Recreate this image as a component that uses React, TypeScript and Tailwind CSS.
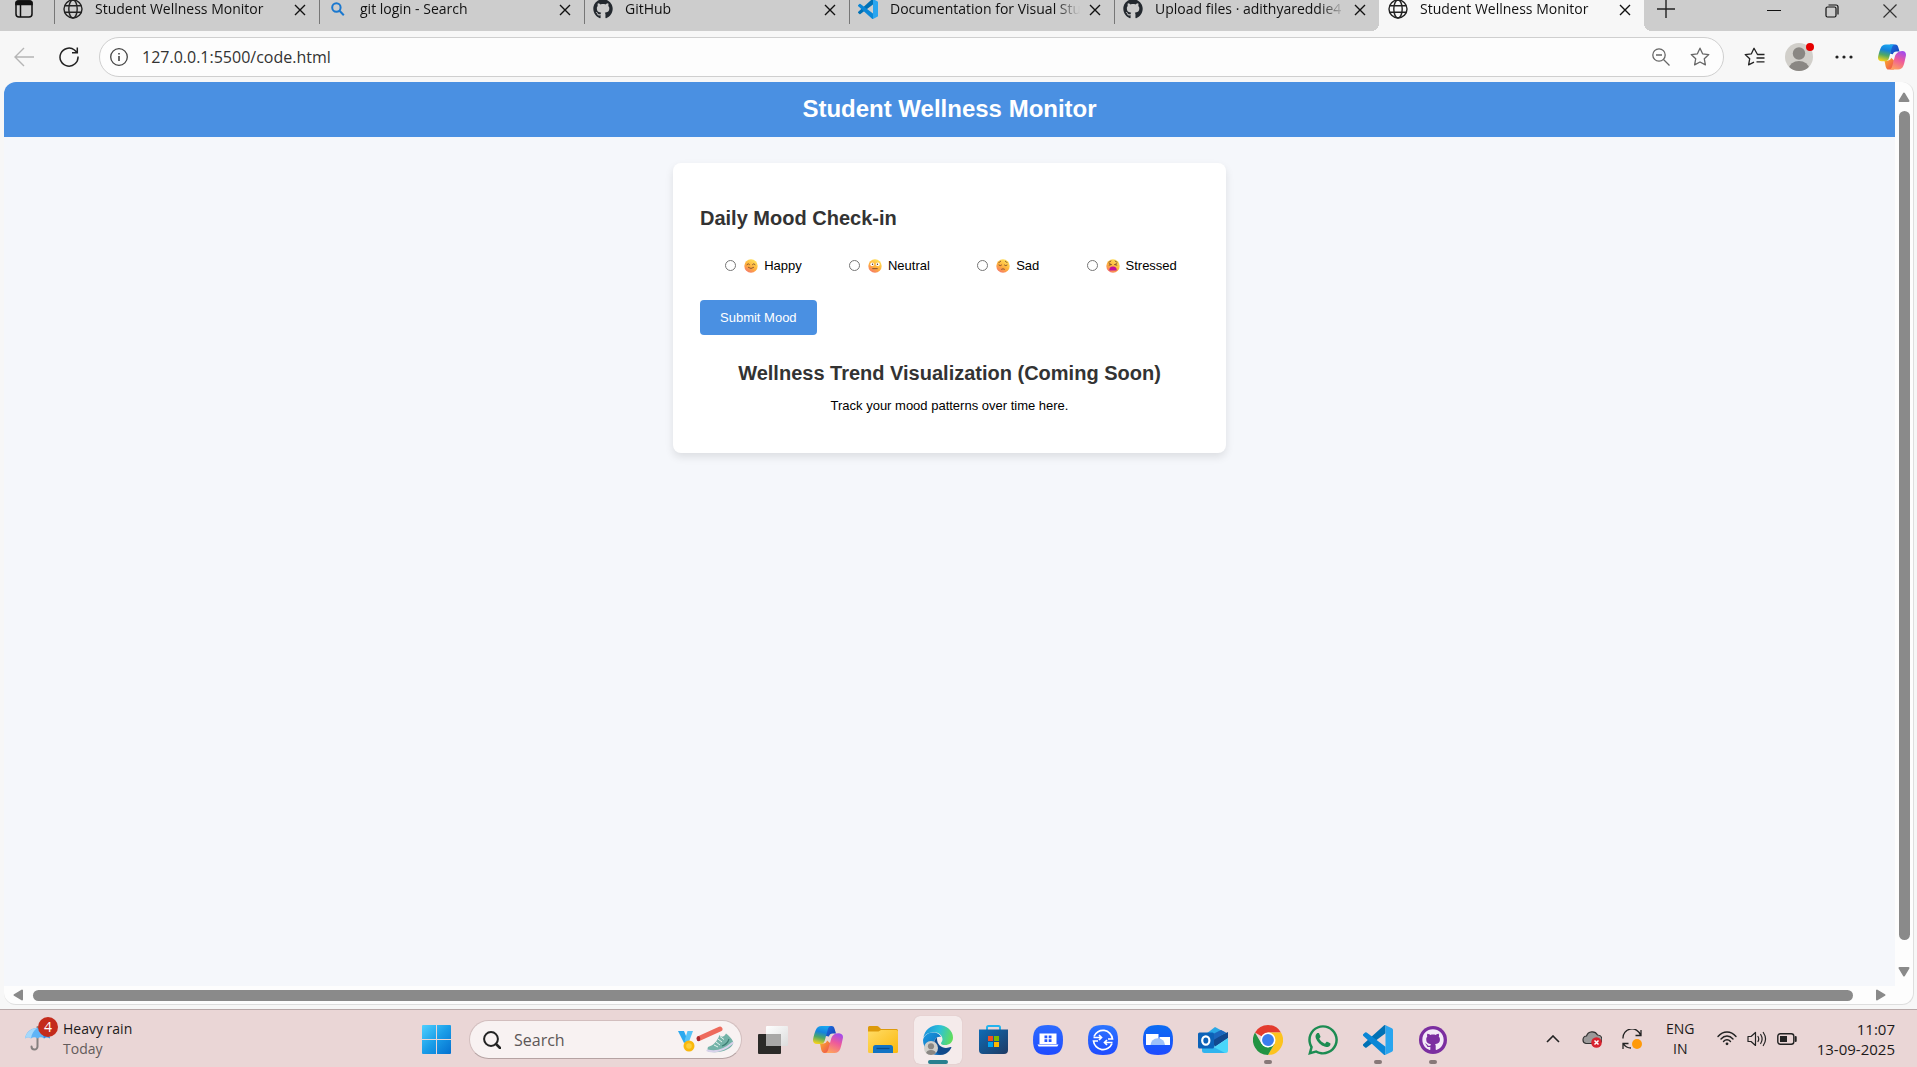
import { useId, type ReactNode } from "react";
import { FaGithub, FaWhatsapp } from "react-icons/fa";

/* ---------- browser icons ---------- */

function GlobeIcon() {
  return (
    <svg viewBox="0 0 20 20" className="size-5" fill="none" stroke="#222" strokeWidth="1.4">
      <circle cx="10" cy="10" r="9" />
      <ellipse cx="10" cy="10" rx="4.2" ry="9" />
      <path d="M1.8 6.8h16.4M1.8 13.2h16.4" />
    </svg>
  );
}

function BingSearchIcon() {
  return (
    <svg viewBox="0 0 20 20" className="size-5" fill="none" stroke="#1a78cf" strokeWidth="2">
      <circle cx="8.4" cy="8.500" r="4.200" />
      <path d="m11.500 11.800 4.300 4.500" />
    </svg>
  );
}

function VsCodeIcon({ className }: { className: string }) {
  return (
    <svg viewBox="0 0 24 24" className={className}>
      <path fill="#0071b5" d="M.327 15.26 16.505.5a1.494 1.494 0 0 1 1.5-.37v6.42L2.926 18a1 1 0 0 1-1.276-.06L.327 16.74a1 1 0 0 1 0-1.48z" />
      <path fill="#0a86d6" d="M.327 8.74 16.505 23.5a1.5 1.5 0 0 0 1.5.37v-6.42L2.926 6a1 1 0 0 0-1.276.06L.327 7.26a1 1 0 0 0 0 1.48z" />
      <path fill="#29a5ef" d="M18 .13l5.15 2.457A1.5 1.5 0 0 1 24 3.94v16.12a1.5 1.5 0 0 1-.85 1.352L18 23.87z" />
    </svg>
  );
}

function CloseIcon() {
  return (
    <svg viewBox="0 0 12 12" className="size-3" stroke="#111" strokeWidth="1.4">
      <path d="m1 1 10 10M11 1 1 11" />
    </svg>
  );
}

function CopilotIcon({ className }: { className: string }) {
  const id = useId();
  return (
    <svg viewBox="0 0 30 27" className={className}>
      <defs>
        <linearGradient id={id + "a"} x1="0.6" y1="0" x2="0.35" y2="1">
          <stop offset="0" stopColor="#1aa7f0" />
          <stop offset=".35" stopColor="#1583dc" />
          <stop offset=".65" stopColor="#4fa865" />
          <stop offset="1" stopColor="#f3d21c" />
        </linearGradient>
        <linearGradient id={id + "b"} x1="0" y1="0" x2="1" y2="1">
          <stop offset="0" stopColor="#1f6fe0" />
          <stop offset="1" stopColor="#123fb5" />
        </linearGradient>
        <linearGradient id={id + "c"} x1="0.7" y1="0" x2="0.3" y2="1">
          <stop offset="0" stopColor="#a44bea" />
          <stop offset=".45" stopColor="#ee5a9b" />
          <stop offset="1" stopColor="#ffa45c" />
        </linearGradient>
        <linearGradient id={id + "d"} x1="0" y1="0" x2="1" y2="1">
          <stop offset="0" stopColor="#fbb32a" />
          <stop offset="1" stopColor="#ee4a50" />
        </linearGradient>
      </defs>
      <path fill={`url(#${id}b)`} d="M13 0h5.600c1.800 0 2.600 1.200 3.200 3.400l1.200 4.200h-3.200c-2.300 0-3.200 1-3.900 3L13 10z" />
      <path fill={`url(#${id}d)`} d="M17 27h-5.600c-1.800 0-2.600-1.200-3.200-3.400L7 17.400h3.200c2.300 0 3.200-1 3.900-3L17 17z" />
      <path fill={`url(#${id}a)`} d="M8.500 0h10c-2.300 0-3.200 1.600-3.800 3.800l-3 11C10.900 17.200 9.600 18 7.400 18H4C.8 18-.5 15.800.2 12.600 1 9 1.800 6.400 2.800 4 3.900 1.300 5.700 0 8.500 0z" />
      <path fill={`url(#${id}c)`} d="M21.500 27h-10c2.300 0 3.200-1.600 3.800-3.800l3-11C19.100 9.800 20.400 9 22.600 7.500L26 7.200c3.200.3 4.500 2.300 3.800 5.400-.8 3.600-1.600 8-2.600 10.400-1.100 2.700-2.900 4-5.700 4z" />
    </svg>
  );
}

function Avatar({ className }: { className: string }) {
  const id = useId();
  return (
    <svg viewBox="0 0 28 28" className={className}>
      <clipPath id={id}>
        <circle cx="14" cy="14" r="14" />
      </clipPath>
      <g clipPath={`url(#${id})`}>
        <path fill="#d1cfca" d="M0 0h28v28H0z" />
        <circle cx="14" cy="10.500" r="6.200" fill="#8a8783" />
        <ellipse cx="14" cy="25.500" rx="10" ry="7.500" fill="#8a8783" />
      </g>
    </svg>
  );
}

/* ---------- mood faces ---------- */

function Face({ children }: { children: ReactNode }) {
  const id = useId();
  return (
    <svg viewBox="0 0 24 24" className="size-3.5" aria-hidden="true">
      <defs>
        <linearGradient id={id} x1=".8" y1="0" x2=".2" y2="1">
          <stop offset="0" stopColor="#ffe65c" />
          <stop offset=".55" stopColor="#ffb13c" />
          <stop offset="1" stopColor="#f4746c" />
        </linearGradient>
      </defs>
      <circle cx="12" cy="12" r="11.500" fill={`url(#${id})`} />
      <g fill="none" stroke="#7a4a2c" strokeWidth="1.500" strokeLinecap="round">
        {children}
      </g>
    </svg>
  );
}

const moods: { id: string; label: string; face: ReactNode }[] = [
  {
    id: "happy",
    label: "Happy",
    face: (
      <Face>
        <path d="M5 9.500q2.300-3 4.500 0M14.500 9.500q2.300-3 4.500 0M7.500 14.500q4.500 4 9 0" />
      </Face>
    ),
  },
  {
    id: "neutral",
    label: "Neutral",
    face: (
      <Face>
        <circle cx="7.200" cy="9" r="3.200" fill="#fff" stroke="none" />
        <circle cx="16.800" cy="9" r="3.200" fill="#fff" stroke="none" />
        <circle cx="7.800" cy="9" r="1.200" fill="#4a2c20" stroke="none" />
        <circle cx="16.200" cy="9" r="1.200" fill="#4a2c20" stroke="none" />
        <path d="M8 16.500h8" />
      </Face>
    ),
  },
  {
    id: "sad",
    label: "Sad",
    face: (
      <Face>
        <path d="M5 6q1.500-.4 3-2M19 6q-1.500-.4-3-2M5 10.500q2.300 2.200 4.500 0M14.500 10.500q2.300 2.200 4.500 0M9.500 17.500q2.500-1.800 5 0" />
      </Face>
    ),
  },
  {
    id: "stressed",
    label: "Stressed",
    face: (
      <Face>
        <path d="M5 5.500q2-.5 3.500-2M19 5.500q-2-.5-3.500-2M5.500 8l4 1.500-4 1M18.500 8l-4 1.500 4 1" />
        <path d="M5.500 19.500q0-6.500 6.500-6.500t6.500 6.500z" fill="#c4109a" stroke="none" />
      </Face>
    ),
  },
];

/* ---------- tab strip ---------- */

function Tab({ icon, title, active, divider }: { icon: ReactNode; title: string; active?: boolean; divider?: boolean }) {
  return (
    <div className={"relative flex w-[265px] items-start " + (active ? "bg-[#f7f7f7]" : "bg-[#cdcdcd]")}>
      {divider && <span className="absolute top-0 left-0 h-6 w-px bg-[#777]" />}
      {active && (
        <>
          <span className="absolute bottom-0 -left-2 size-2 bg-[radial-gradient(circle_at_0_0,#cdcdcd_8px,#f7f7f7_8px)]" />
          <span className="absolute -right-2 bottom-0 size-2 bg-[radial-gradient(circle_at_100%_0,#cdcdcd_8px,#f7f7f7_8px)]" />
        </>
      )}
      <button type="button" className="-mt-px flex min-w-0 flex-1 items-center pl-[9px] text-left">
        <span className="size-5 shrink-0">{icon}</span>
        <span className="ml-3 h-5 w-[190px] overflow-hidden text-[14px] leading-5 whitespace-nowrap text-[#111] [mask-image:linear-gradient(to_right,#000_165px,transparent_190px)]">
          {title}
        </span>
      </button>
      <button type="button" aria-label="Close tab" className="mt-1 mr-[13px] size-3 shrink-0">
        <CloseIcon />
      </button>
    </div>
  );
}

function TabStrip() {
  const github = <FaGithub className="size-5 text-[#24292f]" />;
  return (
    <div className="flex h-[31px] shrink-0 bg-[#cdcdcd]">
      <button type="button" aria-label="Tab actions" className="flex w-[54px] items-start pl-[15px]">
        <svg viewBox="0 0 18 18" className="size-[18px]" fill="none" stroke="#111" strokeWidth="1.500">
          <rect x="1" y="1" width="16" height="16" rx="3" />
          <path d="M1 3q0-2 2-2h12q2 0 2 2v1.500H1z" fill="#111" />
          <path d="M5.500 4v13" />
        </svg>
      </button>
      <Tab divider icon={<GlobeIcon />} title="Student Wellness Monitor" />
      <Tab divider icon={<BingSearchIcon />} title="git login - Search" />
      <Tab divider icon={github} title="GitHub" />
      <Tab divider icon={<VsCodeIcon className="size-5" />} title="Documentation for Visual Stu" />
      <Tab divider icon={github} title="Upload files · adithyareddie4" />
      <Tab active icon={<GlobeIcon />} title="Student Wellness Monitor" />
      <button type="button" aria-label="New tab" className="ml-3 flex h-[17px] w-5 items-center justify-center">
        <svg viewBox="0 0 18 18" className="size-[18px]" stroke="#222" strokeWidth="1.400">
          <path d="M9 0v18M0 9h18" />
        </svg>
      </button>
      <div className="ml-auto flex h-[21px] items-center gap-11 pr-5">
        <button type="button" aria-label="Minimize">
          <svg viewBox="0 0 14 14" className="size-3.5" stroke="#111">
            <path d="M0 6.500h14" />
          </svg>
        </button>
        <button type="button" aria-label="Restore">
          <svg viewBox="0 0 14 14" className="size-3.5" fill="none" stroke="#111" strokeWidth="1.200">
            <rect x="1" y="3" width="10" height="10" rx="1.500" />
            <path d="M3.500 1h7.500a2 2 0 0 1 2 2v7.500" />
          </svg>
        </button>
        <button type="button" aria-label="Close window">
          <svg viewBox="0 0 14 14" className="size-3.5" stroke="#333" strokeWidth="1.200">
            <path d="m.5.5 13 13M13.500.5l-13 13" />
          </svg>
        </button>
      </div>
    </div>
  );
}

/* ---------- toolbar ---------- */

const star = "M10 1.200l2.600 5.600 6.200.8-4.500 4.200 1.100 6.100L10 15l-5.400 2.900 1.100-6.100L1.200 7.600l6.200-.8z";

function Toolbar() {
  return (
    <div className="flex h-[51px] shrink-0 items-center bg-[#f7f7f7] pr-[11px] pl-3.5">
      <button type="button" aria-label="Back">
        <svg viewBox="0 0 20 20" className="size-5" fill="none" stroke="#b5b5b5" strokeWidth="1.400">
          <path d="M20 10H1M10 1 1 10l9 9" />
        </svg>
      </button>
      <button type="button" aria-label="Refresh" className="ml-[25px]">
        <svg viewBox="0 0 20 20" className="size-5" fill="none" stroke="#222" strokeWidth="1.500">
          <path d="M19 9.500A9 9 0 1 1 15.500 3l2.500 2.500M18.300.5v5.300H13" />
        </svg>
      </button>
      <div className="ml-5 flex h-10 min-w-0 flex-1 items-center rounded-full border border-[#cfcfcf] bg-[#fdfdfd] pr-[13px] pl-2.5">
        <button type="button" aria-label="Site information">
          <svg viewBox="0 0 18 18" className="size-[18px]" fill="none" stroke="#444" strokeWidth="1.300">
            <circle cx="9" cy="9" r="8.300" />
            <path d="M9 8v5M9 5v1.500" strokeWidth="1.600" />
          </svg>
        </button>
        <input
          type="text"
          aria-label="Address"
          defaultValue="127.0.0.1:5500/code.html"
          className="ml-3.5 min-w-0 flex-1 bg-transparent text-[16px] leading-6 text-[#333] outline-none"
        />
        <button type="button" aria-label="Zoom out">
          <svg viewBox="0 0 18 18" className="size-[18px]" fill="none" stroke="#666" strokeWidth="1.300">
            <circle cx="7" cy="7" r="6.200" />
            <path d="M4 7h6M11.500 11.500l6 6" />
          </svg>
        </button>
        <button type="button" aria-label="Add to favorites" className="ml-5">
          <svg viewBox="0 0 20 20" className="size-5" fill="none" stroke="#666" strokeWidth="1.300" strokeLinejoin="round">
            <path d={star} />
          </svg>
        </button>
      </div>
      <button type="button" aria-label="Favorites" className="ml-5">
        <svg viewBox="0 0 21 20" className="h-5 w-[21px]" fill="none" stroke="#222" strokeWidth="1.300" strokeLinejoin="round">
          <path d="M20.500 7.500h-7L10 1.200 7.400 6.800l-6.200.8 4.500 4.200-1.100 6.100L10 15.200M12.500 11h8M12.500 14.800h8" />
        </svg>
      </button>
      <button type="button" aria-label="Profile" className="relative ml-5 size-7">
        <Avatar className="size-7" />
        <span className="absolute top-0 -right-px size-2 rounded-full bg-[#e60000]" />
      </button>
      <button type="button" aria-label="More" className="ml-[22px]">
        <svg viewBox="0 0 18 4" className="h-1 w-[18px]" fill="#222">
          <circle cx="2" cy="2" r="1.600" />
          <circle cx="9" cy="2" r="1.600" />
          <circle cx="16" cy="2" r="1.600" />
        </svg>
      </button>
      <button type="button" aria-label="Copilot" className="ml-[25px]">
        <CopilotIcon className="h-[26px] w-7" />
      </button>
    </div>
  );
}

/* ---------- web page ---------- */

function WellnessPage() {
  return (
    <div className="min-h-0 min-w-0 flex-1 bg-[#f5f7fb] font-['Liberation_Sans',Arial,sans-serif] text-black">
      <header className="flex h-[55px] items-center justify-center bg-[#4a90e2] pb-0.5">
        <h1 className="text-[24px] leading-7 font-bold text-white">Student Wellness Monitor</h1>
      </header>
      <main className="mx-auto mt-[26px] w-full max-w-[553px] rounded-lg bg-white px-[27px] pt-[39px] pb-[35px] shadow-[0_4px_8px_rgba(0,0,0,0.1)]">
        <form onSubmit={(e) => e.preventDefault()}>
          <h2 className="text-[20px] leading-8 font-bold text-[#333]">Daily Mood Check-in</h2>
          <div className="mt-5 flex justify-around">
            {moods.map((m) => (
              <label key={m.id} htmlFor={m.id} className="flex h-6 items-center text-[13px] leading-6">
                <input
                  id={m.id}
                  type="radio"
                  name="mood"
                  className="mr-2 mb-0.5 ml-[3px] size-[11px] appearance-none rounded-full border border-[#767676] bg-white"
                />
                {m.face}
                <span className="ml-1.5">{m.label}</span>
              </label>
            ))}
          </div>
          <button type="submit" className="mt-[22px] flex h-[35px] items-center rounded bg-[#4a90e2] px-5 text-[13px] text-white">
            Submit Mood
          </button>
        </form>
        <section className="mt-[22px] text-center">
          <h2 className="text-[20px] leading-8 font-bold text-[#333]">Wellness Trend Visualization (Coming Soon)</h2>
          <p className="mt-[5px] text-[13px] leading-6">Track your mood patterns over time here.</p>
        </section>
      </main>
    </div>
  );
}

function Arrow({ d }: { d: string }) {
  return (
    <svg viewBox="0 0 12 12" className="size-3 shrink-0" fill="#8a8a8a" stroke="#8a8a8a" strokeWidth="2" strokeLinejoin="round">
      <path d={d} />
    </svg>
  );
}

function Viewport() {
  return (
    <div className="mr-[3px] mb-1 ml-1 flex min-h-0 flex-1 flex-col overflow-hidden rounded-xl border-r border-b border-[#dedede] bg-[#fdfdfd]">
      <div className="flex min-h-0 flex-1">
        <WellnessPage />
        <div className="flex w-[18px] shrink-0 flex-col items-center pt-[9px] pb-2">
          <Arrow d="M6 2.500 10.500 10h-9z" />
          <div className="mt-2 mb-[26px] w-[11px] flex-1 rounded-full bg-[#8a8a8a]" />
          <Arrow d="M6 9.500 10.500 2h-9z" />
        </div>
      </div>
      <div className="flex h-[18px] shrink-0 items-center pr-[26px] pl-2">
        <Arrow d="M2.500 6 10 1.500v9z" />
        <div className="mr-[22px] ml-[9px] h-[11px] flex-1 rounded-full bg-[#8a8a8a]" />
        <Arrow d="M9.500 6 2 1.500v9z" />
      </div>
    </div>
  );
}

/* ---------- taskbar icons ---------- */

function UmbrellaIcon() {
  return (
    <svg viewBox="0 0 25 25" className="h-[25px] w-[25px]">
      <path d="M12.500 1v19.500a3 3 0 0 1-6 0" fill="none" stroke="#85807f" strokeWidth="2" strokeLinecap="round" />
      <path d="M0 12.500C1 6.500 5.500 2 12.500 2S24 6.500 25 12.500c-2-1.600-4.500-1.600-6 0-2-1.600-4.500-1.600-6.500 0-2-1.600-4.500-1.600-6.500 0-1.500-1.600-4-1.600-6 0z" fill="#5fb4f7" />
      <path d="M6 12.500C6.500 8 9 4 12.500 2 8 2 1 5 0 12.500c2-1.600 4.500-1.600 6 0z" fill="#a5d8fb" />
      <path d="M19 12.500C18.500 8 16 4 12.500 2 18 2 24 6 25 12.500c-2-1.600-4.500-1.600-6 0z" fill="#2f86e6" />
    </svg>
  );
}

function SearchArt() {
  return (
    <svg viewBox="0 0 56 28" className="h-7 w-14">
      <path fill="#2aa9ef" d="M0 5h6l4 10-4 2z" />
      <path fill="#55c3f7" d="M15 5h-5.500L6.500 15l4 2z" />
      <circle cx="11" cy="20" r="5.500" fill="#f9b80d" />
      <circle cx="11" cy="20" r="2.800" fill="#fdcf3d" />
      <path d="M21 12.500 42 3" stroke="#ee6a5c" strokeWidth="5" strokeLinecap="round" />
      <ellipse cx="20.500" cy="12.700" rx="1.800" ry="2.600" fill="#a82a2e" />
      <path fill="#74b3a8" d="M30 21c5-1.500 9-5 11.500-12 1.500 2 3.500 2.500 5.500 0l1-1.500c2.500 2 5.500 4.500 7 8 .8 3.500-2 6-6 8-5 2.500-12 3.500-18.500 2-1.200-1.500-1.200-3-.5-4.500z" />
      <path d="M29.500 24.500c9 2.500 17-.5 25-7.500" fill="none" stroke="#d8d2ea" strokeWidth="2.200" strokeLinecap="round" />
      <path d="m40 13 4 3M38 16l4 3M42 10.500l4 3M36 19l4 2" stroke="#e6f3ef" strokeWidth="1" />
      <path d="M44 20c3-1 6-3.500 7-7" fill="none" stroke="#3d7f75" strokeWidth="1.200" />
    </svg>
  );
}

function TaskViewIcon() {
  return (
    <svg viewBox="0 0 30 28" className="h-7 w-[30px]">
      <defs>
        <linearGradient id="tv-front" x1="0" y1="0" x2="1" y2="1">
          <stop offset="0" stopColor="#fff" />
          <stop offset="1" stopColor="#dcdcdc" />
        </linearGradient>
      </defs>
      <rect y="8" width="23" height="20" rx="1" fill="#2b2a28" />
      <rect x="8" width="22" height="20" rx="1" fill="url(#tv-front)" />
      <path d="M8 8h15v12H8z" fill="#a9a8a7" />
    </svg>
  );
}

function FolderIcon() {
  return (
    <svg viewBox="0 0 30 27" className="h-[27px] w-[30px]">
      <defs>
        <linearGradient id="folder-front" x1="0" y1="0" x2="1" y2="1">
          <stop offset="0" stopColor="#ffdc66" />
          <stop offset="1" stopColor="#fbb80c" />
        </linearGradient>
      </defs>
      <path fill="#dd9a0b" d="M0 1.500Q0 0 1.500 0H9q1 0 2 1l2 2h15.500Q30 3 30 4.500V8H0z" />
      <path fill="url(#folder-front)" d="M0 5.500h10.500L13 4h15.500q1.500 0 1.500 1.500v20q0 1.500-1.500 1.500h-27Q0 27 0 25.500z" />
      <path fill="#1273c4" d="M5 27v-5.500Q5 19 7.500 19h15q2.500 0 2.500 2.500V27z" />
      <path stroke="#0a4c8c" strokeWidth="1.300" d="M8.500 22.500h13" />
    </svg>
  );
}

function EdgeIcon() {
  return (
    <svg viewBox="0 0 30 30" className="size-[30px]">
      <defs>
        <linearGradient id="edge-top" x1="0" y1=".4" x2="1" y2=".6">
          <stop offset="0" stopColor="#1c93dc" />
          <stop offset=".5" stopColor="#2dc1d8" />
          <stop offset="1" stopColor="#63df57" />
        </linearGradient>
        <linearGradient id="edge-body" x1="0" y1="0" x2="1" y2="1">
          <stop offset="0" stopColor="#1a9be2" />
          <stop offset="1" stopColor="#0b5fb0" />
        </linearGradient>
      </defs>
      <path fill="url(#edge-body)" d="M0 15C1 10 5.500 7.500 10 7.500c4 0 7 2 8 4.500-4-1-7 2-7 7 0 5 4 9 9 10-2 1-3.500 1-5 1C6.500 30 0 23 0 15z" />
      <path fill="#114a8b" d="M11 19c0-3 1-5 3-6.500C13.500 19 18 23 23 23c2 0 3.500-.5 4.700-.9.600-.2.900.2.500.8C25.500 28 21 30.500 17 29.500c-4-1.500-6-5.500-6-10.500z" />
      <path fill="url(#edge-top)" d="M.3 13C1.500 5 8 0 15 0c9 0 15 6 15 12.500 0 5-3.800 7.500-8 7.500-3 0-4-.8-4-1.800s1.500-1.500 1.500-4c0-3.500-3.500-7-8.500-7C6 7.200 1.500 9.500.3 13z" />
    </svg>
  );
}

function StoreIcon() {
  return (
    <svg viewBox="0 0 29 29" className="size-[29px]">
      <defs>
        <linearGradient id="store-bag" x1="0" y1="0" x2="1" y2="1">
          <stop offset="0" stopColor="#0e6cb6" />
          <stop offset="1" stopColor="#1e3a63" />
        </linearGradient>
      </defs>
      <path d="M8 6V2.500Q8 1 9.500 1h10Q21 1 21 2.500V6" fill="none" stroke="#24b4ee" strokeWidth="2" />
      <path d="M0 4.500h29V25q0 4-4 4H4q-4 0-4-4z" fill="url(#store-bag)" />
      <path d="M9 11h5v5H9z" fill="#f25022" />
      <path d="M15 11h5v5h-5z" fill="#7fba00" />
      <path d="M9 17h5v5H9z" fill="#00a4ef" />
      <path d="M15 17h5v5h-5z" fill="#ffb900" />
    </svg>
  );
}

function BlueTile({ from, children }: { from: string; children: ReactNode }) {
  const id = useId();
  return (
    <svg viewBox="0 0 30 30" className="size-[30px]">
      <defs>
        <linearGradient id={id} x1="0" y1="0" x2="0" y2="1">
          <stop offset="0" stopColor={from} />
          <stop offset="1" stopColor="#1f4bff" />
        </linearGradient>
      </defs>
      <path fill={`url(#${id})`} d="M15 0c11 0 15 4 15 15s-4 15-15 15S0 26 0 15 4 0 15 0z" />
      {children}
    </svg>
  );
}

function LaptopTile() {
  return (
    <BlueTile from="#2c6bff">
      <path fill="#fff" d="M6.500 8.500h17v10.500h-17zM4.500 19.500h21l-1.200 2H5.700z" />
      <path fill="#2457ff" d="M11.500 10.500h2.800v2.800h-2.800zM15.700 10.500h2.800v2.800h-2.800zM11.500 14.300h2.800v2.800h-2.800zM15.700 14.300h2.800v2.800h-2.800z" />
    </BlueTile>
  );
}

function SwitchTile() {
  return (
    <BlueTile from="#2c75ff">
      <g fill="none" stroke="#fff" strokeWidth="1.700">
        <path d="M6 11.500A9.600 9.600 0 0 1 24.500 14H20M24 18.500A9.600 9.600 0 0 1 5.500 16H10" />
        <path d="M5.500 12.500H13M11 10l2.500 2.500L11 15M24.500 17.500H17M19 15l-2.500 2.500L19 20" />
      </g>
    </BlueTile>
  );
}

function ScreensTile() {
  return (
    <BlueTile from="#0a6cf2">
      <path fill="#fff" d="M3 9h12.500v11H3zM16.500 12h10.500v8H16.500z" />
      <path fill="#9cc0fa" d="M7.500 20a7 6.500 0 0 1 14.500 0z" />
    </BlueTile>
  );
}

function OutlookIcon() {
  return (
    <svg viewBox="0 0 30 26" className="h-[26px] w-[30px]">
      <path fill="#2ba8e6" d="M4 10 17 0l13 7v4L17 20 4 14z" />
      <path fill="#12498f" d="M13 13 30 5v6L17 19.500z" />
      <path fill="#1c66bd" d="m11 9 12-6 5 2.500L14 14z" />
      <path fill="#49d6fa" d="M30 11v12.500q0 2.500-2.500 2.500H8z" />
      <path fill="#2fb4ee" d="M4 14 27 26H6.500Q4 26 4 23.500z" />
      <rect y="5.500" width="16" height="16" rx="1.500" fill="#0c62b8" />
      <ellipse cx="7.800" cy="13.500" rx="3.600" ry="4.200" fill="none" stroke="#fff" strokeWidth="2.200" />
    </svg>
  );
}

function ChromeIcon() {
  return (
    <svg viewBox="0 0 48 48" className="size-[30px]">
      <path fill="#e33b2e" d="M24 0a24 24 0 0 1 20.800 12H24L13.600 18 3.200 12A24 24 0 0 1 24 0z" />
      <path fill="#fcc31e" d="M44.800 12A24 24 0 0 1 24 48l10.400-18L34 17l-10-5z" />
      <path fill="#229342" d="M3.200 12A24 24 0 0 0 24 48l10.400-18L24 36l-10.400-6z" />
      <circle cx="24" cy="24" r="12" fill="#fff" />
      <circle cx="24" cy="24" r="9.500" fill="#3b7ded" />
    </svg>
  );
}

function TaskButton({ label, children, running, active }: { label: string; children: ReactNode; running?: boolean; active?: boolean }) {
  return (
    <button
      type="button"
      aria-label={label}
      className={"relative flex size-12 shrink-0 items-center justify-center rounded-md " + (active ? "bg-[#f5ebeb] shadow-[0_0_1px_#c9b0b0]" : "")}
    >
      {children}
      {running && <span className="absolute bottom-0 left-5 h-1 w-2 rounded-full bg-[#877878]" />}
      {active && <span className="absolute bottom-0 left-3.5 h-1 w-5 rounded-full bg-[#27808f]" />}
    </button>
  );
}

/* ---------- taskbar ---------- */

function Taskbar() {
  return (
    <footer className="flex h-[58px] shrink-0 items-center border-t border-[#b9a9a9] bg-[#ead6d6] pt-0.5">
      <button type="button" className="relative flex w-[412px] items-center pb-0.5 pl-[25px] text-left">
        <UmbrellaIcon />
        <span className="absolute -top-0.5 left-[38px] flex size-5 items-center justify-center rounded-full bg-[#c42b1c] text-[14px] leading-5 text-white">
          4
        </span>
        <span className="ml-[13px] text-[14px] leading-5 text-[#1c1a1a]">
          Heavy rain
          <span className="block text-[#635b5b]">Today</span>
        </span>
      </button>
      <TaskButton label="Start">
        <svg viewBox="0 0 29 29" className="size-[29px]">
          <defs>
            <linearGradient id="win" x1="0" y1="0" x2="1" y2="1">
              <stop offset="0" stopColor="#4fd0ff" />
              <stop offset=".5" stopColor="#1a9de8" />
              <stop offset="1" stopColor="#0470cf" />
            </linearGradient>
          </defs>
          <path fill="url(#win)" d="M1 0h13v14H0V1q0-1 1-1zM15 0h13q1 0 1 1v13H15zM0 15h14v14H1q-1 0-1-1zM15 15h14v13q0 1-1 1H15z" />
        </svg>
      </TaskButton>
      <label className="mr-[7px] ml-[9px] flex h-[39px] w-[273px] shrink-0 items-center rounded-full border border-[#d2bebe] border-b-[#b5a3a3] bg-[#f8f2f2] pr-[7px] pl-[13px]">
        <svg viewBox="0 0 18 18" className="size-[18px] shrink-0" fill="none" stroke="#222" strokeWidth="2">
          <circle cx="8" cy="8" r="6.900" />
          <path d="m13 13 4 4" strokeWidth="2.500" strokeLinecap="round" />
        </svg>
        <input
          type="text"
          aria-label="Search"
          placeholder="Search"
          className="ml-[13px] min-w-0 flex-1 bg-transparent text-[16px] leading-6 outline-none placeholder:text-[#5c5757]"
        />
        <SearchArt />
      </label>
      <div className="flex gap-[7px]">
        <TaskButton label="Task view">
          <TaskViewIcon />
        </TaskButton>
        <TaskButton label="Copilot">
          <CopilotIcon className="h-[27px] w-[30px]" />
        </TaskButton>
        <TaskButton label="File Explorer">
          <FolderIcon />
        </TaskButton>
        <TaskButton label="Microsoft Edge" active>
          <EdgeIcon />
          <Avatar className="absolute bottom-[9px] left-2.5 size-3.5" />
        </TaskButton>
        <TaskButton label="Microsoft Store">
          <StoreIcon />
        </TaskButton>
        <TaskButton label="Devices">
          <LaptopTile />
        </TaskButton>
        <TaskButton label="Switch">
          <SwitchTile />
        </TaskButton>
        <TaskButton label="Screens">
          <ScreensTile />
        </TaskButton>
        <TaskButton label="Outlook">
          <OutlookIcon />
        </TaskButton>
        <TaskButton label="Chrome" running>
          <ChromeIcon />
        </TaskButton>
        <TaskButton label="WhatsApp">
          <FaWhatsapp className="size-[34px] text-[#1c8c52]" />
        </TaskButton>
        <TaskButton label="Visual Studio Code" running>
          <VsCodeIcon className="size-[30px]" />
        </TaskButton>
        <TaskButton label="GitHub Desktop" running>
          <span className="flex size-7 items-center justify-center rounded-full bg-[#7b2ea0]">
            <FaGithub className="size-[22px] text-[#f3eaf7]" />
          </span>
        </TaskButton>
      </div>
      <div className="ml-auto flex items-center pr-[22px] pb-0.5 text-[#1c1a1a]">
        <button type="button" aria-label="Show hidden icons">
          <svg viewBox="0 0 14 8" className="h-2 w-3.5" fill="none" stroke="#222" strokeWidth="1.600">
            <path d="m1 7 6-6 6 6" />
          </svg>
        </button>
        <svg viewBox="0 0 20 18" className="ml-[22px] h-[18px] w-5">
          <path d="M4 13.500a3.800 3.800 0 0 1 .5-7.500A6 6 0 0 1 15.500 5a4.300 4.300 0 0 1 1 8.500z" fill="#9b9999" stroke="#333" strokeWidth="1.200" />
          <circle cx="14.500" cy="12.500" r="5.300" fill="#d8232f" />
          <path d="m12.500 10.500 4 4M16.500 10.500l-4 4" stroke="#fff" strokeWidth="1.500" />
        </svg>
        <svg viewBox="0 0 20 20" className="ml-5 size-5" fill="none" stroke="#222" strokeWidth="1.300">
          <path d="M1 9.500A9 9 0 0 1 18.500 6M19 1v5.500h-5.500M1 20v-5.500h5.500M1.500 15A9 9 0 0 0 9 19" />
          <circle cx="15" cy="15" r="5" fill="#ff9a0a" stroke="none" />
        </svg>
        <span className="ml-6 w-[29px] text-center text-[14px] leading-5">ENG IN</span>
        <svg viewBox="0 0 20 15" className="ml-[22px] h-[15px] w-5" fill="none" stroke="#222" strokeWidth="1.400" strokeLinecap="round">
          <path d="M1 5.500C6-.5 14-.5 19 5.500M4 8c3.500-4 8.500-4 12 0M6.500 10.500c2-2.300 5-2.300 7 0" />
          <circle cx="10" cy="12.800" r="1.400" fill="#222" stroke="none" />
        </svg>
        <svg viewBox="0 0 20 16" className="ml-2.5 h-4 w-5" fill="none" stroke="#222" strokeWidth="1.200" strokeLinejoin="round" strokeLinecap="round">
          <path d="M1 5.500h3L8.500 1.500v13L4 10.500H1zM11 5.500q1.500 2.500 0 5M13.700 3.500q2.800 4.500 0 9M16.300 1.500q4.500 6.500 0 13" />
        </svg>
        <svg viewBox="0 0 20 12" className="ml-2.5 h-3 w-5" fill="none" stroke="#222" strokeWidth="1.400">
          <rect x=".8" y=".8" width="16" height="10.400" rx="2.500" />
          <path d="M3 3h7v6H3z" fill="#222" stroke="none" />
          <path d="M18.700 4v4" strokeWidth="2" strokeLinecap="round" />
        </svg>
        <time className="ml-5 text-right text-[15px] leading-5">
          11:07
          <span className="block">13-09-2025</span>
        </time>
      </div>
    </footer>
  );
}

export default function App() {
  return (
    <div className="flex h-screen flex-col overflow-hidden bg-[#f7f7f7] font-['Open_Sans','Noto_Sans',sans-serif]">
      <TabStrip />
      <Toolbar />
      <Viewport />
      <Taskbar />
    </div>
  );
}
